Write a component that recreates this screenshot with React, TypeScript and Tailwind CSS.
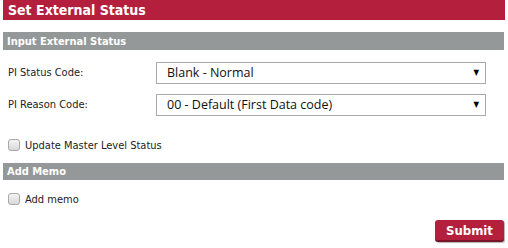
export default function App() {
  const font = { fontFamily: "'DejaVu Sans Condensed', 'DejaVu Sans', Verdana, sans-serif" };

  return (
    <div
      className="w-[508px] h-[248px] bg-white px-[3px] overflow-hidden text-[#222]"
      style={font}
    >
      {/* Header */}
      <div className="h-[20px] bg-[#b41f3d] pl-[5px] flex items-center text-white font-bold text-[14px] leading-none">
        Set External Status
      </div>

      {/* Input External Status */}
      <div className="mt-[12px] h-[18px] w-[501px] bg-[#959898] pl-[4px] flex items-center text-white font-bold text-[11px] leading-none">
        Input External Status
      </div>

      <div className="mt-[12px] flex flex-col gap-[10px]">
        <SelectRow label="PI Status Code:" value="Blank - Normal" />
        <SelectRow label="PI Reason Code:" value="00 - Default (First Data code)" />
      </div>

      <div className="mt-[23px] pl-[5px]">
        <CheckRow label="Update Master Level Status" />
      </div>

      {/* Add Memo */}
      <div className="mt-[12px] h-[17px] w-[501px] bg-[#959898] pl-[4px] flex items-center text-white font-bold text-[11px] leading-none">
        Add Memo
      </div>

      <div className="mt-[13px] pl-[5px]">
        <CheckRow label="Add memo" />
      </div>

      <div className="mt-[15px] flex justify-end pr-[1px]">
        <button className="w-[69px] h-[22px] rounded-[3px] bg-[#b41f3d] border-b-2 border-[#7a1428] text-white font-bold text-[13px] leading-none shadow-[1px_1px_1px_rgba(0,0,0,0.3)]">
          Submit
        </button>
      </div>
    </div>
  );
}

function SelectRow({ label, value }: { label: string; value: string }) {
  return (
    <div className="flex items-center">
      <div className="w-[153px] pl-[5px] text-[11px]">{label}</div>
      <div className="w-[330px] h-[22px] border border-[#aaa] bg-white flex items-center justify-between pl-[10px] pr-[6px]">
        <span
          className="text-[12.5px] text-[#111] leading-none"
          style={{ fontFamily: "'Open Sans', 'Noto Sans', sans-serif" }}
        >
          {value}
        </span>
        <span className="text-[8px] text-black leading-none">▼</span>
      </div>
    </div>
  );
}

function CheckRow({ label }: { label: string }) {
  return (
    <div className="h-[12px] flex items-center gap-[5px]">
      <div className="w-[12px] h-[12px] rounded-[3px] border border-[#a8a8a8] bg-gradient-to-b from-[#f4f4f4] to-[#d8d8d8]" />
      <span className="text-[11px] leading-none">{label}</span>
    </div>
  );
}
